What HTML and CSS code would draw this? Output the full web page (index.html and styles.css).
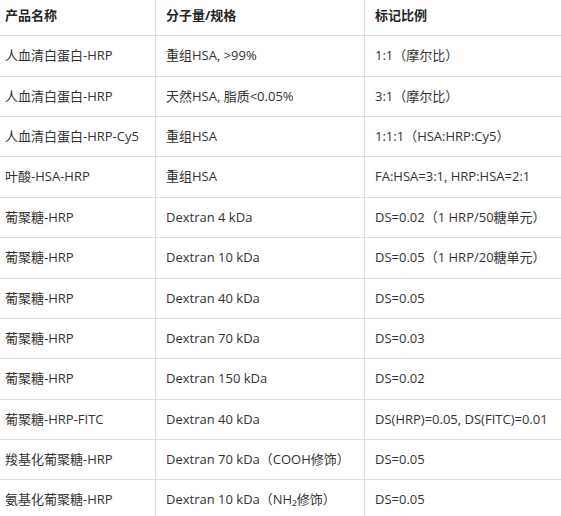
FILE: index.html
```html
<!DOCTYPE html>
<html lang="zh">
<head>
<meta charset="utf-8">
<link rel="stylesheet" href="styles.css">
</head>
<body>
<div class="frame">
<div class="wrap">
<table class="spec">
  <thead>
    <tr><th class="c1">产品名称</th><th class="c2">分子量/规格</th><th class="c3">标记比例</th></tr>
  </thead>
  <tbody>
    <tr><td>人血清白蛋白-HRP</td><td>重组HSA, &gt;99%</td><td>1:1（摩尔比）</td></tr>
    <tr><td>人血清白蛋白-HRP</td><td>天然HSA, 脂质&lt;0.05%</td><td>3:1（摩尔比）</td></tr>
    <tr><td>人血清白蛋白-HRP-Cy5</td><td>重组HSA</td><td>1:1:1（HSA:HRP:Cy5）</td></tr>
    <tr><td>叶酸-HSA-HRP</td><td>重组HSA</td><td>FA:HSA=3:1, HRP:HSA=2:1</td></tr>
    <tr><td>葡聚糖-HRP</td><td>Dextran 4 kDa</td><td>DS=0.02（1 HRP/50糖单元）</td></tr>
    <tr><td>葡聚糖-HRP</td><td>Dextran 10 kDa</td><td>DS=0.05（1 HRP/20糖单元）</td></tr>
    <tr><td>葡聚糖-HRP</td><td>Dextran 40 kDa</td><td>DS=0.05</td></tr>
    <tr><td>葡聚糖-HRP</td><td>Dextran 70 kDa</td><td>DS=0.03</td></tr>
    <tr><td>葡聚糖-HRP</td><td>Dextran 150 kDa</td><td>DS=0.02</td></tr>
    <tr><td>葡聚糖-HRP-FITC</td><td>Dextran 40 kDa</td><td>DS(HRP)=0.05, DS(FITC)=0.01</td></tr>
    <tr><td>羧基化葡聚糖-HRP</td><td>Dextran 70 kDa（COOH修饰）</td><td>DS=0.05</td></tr>
    <tr><td>氨基化葡聚糖-HRP</td><td>Dextran 10 kDa（NH₂修饰）</td><td>DS=0.05</td></tr>
  </tbody>
</table>
</div>
</div>
</body>
</html>
```

FILE: styles.css
```css
html, body {
  margin: 0;
  padding: 0;
  background: #ffffff;
  overflow: hidden;
}
.frame {
  width: 561px;
  height: 516px;
  overflow: hidden;
}
.wrap {
  margin: -4px 0 0 -5px;
  width: 620px;
}
.spec {
  border-collapse: collapse;
  table-layout: fixed;
  width: 620px;
  font-family: "Open Sans", "Noto Sans CJK SC", sans-serif;
  font-size: 13px;
  color: #333333;
}
.spec th, .spec td {
  padding: 10px 10px;
  line-height: 19.36px;
  text-align: left;
  white-space: nowrap;
  border: 1px solid #dedede;
  border-top: none;
  vertical-align: middle;
}
.spec th {
  font-weight: 700;
  color: #262626;
}
.spec tr > :first-child { border-left: none; }
.c1 { width: 140px; }
.c2 { width: 188px; }
.c3 { width: auto; }
```
